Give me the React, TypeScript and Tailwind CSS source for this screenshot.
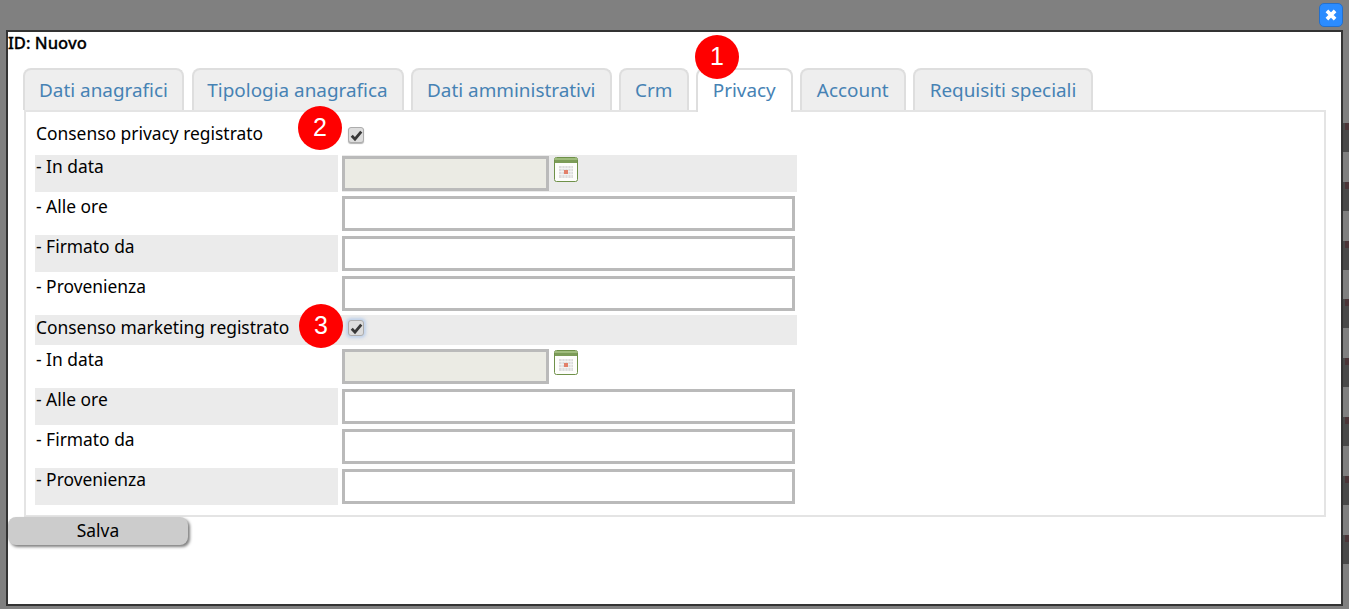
const tabs = [
  { t: "Dati anagrafici", w: "w-[161px]" },
  { t: "Tipologia anagrafica", w: "w-[212px]" },
  { t: "Dati amministrativi", w: "w-[200.5px]" },
  { t: "Crm", w: "w-[69.5px]" },
  { t: "Privacy", w: "w-[96.5px]", active: true },
  { t: "Account", w: "w-[105.5px]" },
  { t: "Requisiti speciali", w: "w-[180px]" },
];

const marks = [0, 1, 2, 3, 4, 5, 6, 7];

function Check({ focus }: { focus?: boolean }) {
  return (
    <span
      className={`flex h-[16px] w-[16px] items-center justify-center rounded-[3px] border border-[#adadad] bg-[#dddddd] ${
        focus ? "shadow-[0_0_3px_2px_rgba(150,185,235,0.5)]" : "shadow-[0_1px_1px_rgba(0,0,0,0.3)]"
      }`}
    >
      <svg viewBox="0 0 12 12" className="h-[13px] w-[13px]">
        <path d="M1.6 6.2 4.6 9.4 10.4 2.4" fill="none" stroke="#383838" strokeWidth="2.6" />
      </svg>
    </span>
  );
}

function Cal() {
  return (
    <svg viewBox="0 0 24 25" className="ml-[5px] mt-[2px] h-[25px] w-[24px] shrink-0">
      <rect x="0.5" y="0.5" width="23" height="24" rx="2" fill="#fdfdfb" stroke="#6f9149" />
      <rect x="1" y="1" width="22" height="2" fill="#9fbc7c" />
      <rect x="1" y="3" width="22" height="3" fill="#7c9c58" />
      <rect x="5" y="9" width="14" height="12" fill="#dcdcdc" />
      <path
        d="M5 11.5H19M5 14.5H19M5 17.5H19M8 9V21M11 9V21M14 9V21M17 9V21"
        stroke="#f6f6f6"
        strokeWidth="0.8"
      />
      <rect x="10" y="13" width="4" height="4" fill="#e2806a" />
    </svg>
  );
}

function Badge({ n, className }: { n: number; className: string }) {
  return (
    <span
      className={`absolute z-20 flex h-[44px] w-[44px] items-center justify-center rounded-full bg-[#ff0000] font-['Liberation_Sans',sans-serif] text-[25px] text-white ${className}`}
    >
      {n}
    </span>
  );
}

function Row({ label, gray, date }: { label: string; gray?: boolean; date?: boolean }) {
  return (
    <div className="flex h-[37px] w-[762px]">
      <div className={`w-[303px] pl-[1px] leading-[22px] ${gray ? "bg-[#ebebeb]" : ""}`}>{label}</div>
      <div className={`ml-[4px] flex w-[455px] items-start ${gray && date ? "bg-[#ebebeb]" : ""}`}>
        {date ? (
          <>
            <div className="mt-[1px] h-[35px] w-[207px] border-[3px] border-[#bababa] bg-[#ebebe4]" />
            <Cal />
          </>
        ) : (
          <div className="mt-[1px] h-[35px] w-[453px] border-[3px] border-[#bababa] bg-white" />
        )}
      </div>
    </div>
  );
}

function CheckRow({
  label,
  gray,
  h,
  labelPad,
  boxPad,
  focus,
}: {
  label: string;
  gray?: boolean;
  h: string;
  labelPad: string;
  boxPad: string;
  focus?: boolean;
}) {
  return (
    <div className={`flex w-[762px] ${h} ${gray ? "bg-[#ebebeb]" : ""}`}>
      <div className={`w-[303px] pl-[1px] leading-[22px] ${labelPad}`}>{label}</div>
      <div className={`ml-[10px] ${boxPad}`}>
        <Check focus={focus} />
      </div>
    </div>
  );
}

export default function App() {
  return (
    <div className="relative flex h-[609px] w-[1349px] overflow-hidden bg-[#808080] font-['Noto_Sans',sans-serif] text-[17.4px] text-black">
      <div className="ml-[6px] mt-[30px] h-[576px] w-[1337px] shrink-0 border-2 border-[#333333] bg-white">
        <div className="h-[20px] text-[16.6px] font-medium leading-[22px] [-webkit-text-stroke:0.3px_black]">ID: Nuovo</div>
        <div className="ml-[15px] mt-[16px] flex h-[42px] items-start gap-[7.5px]">
          {tabs.map((x) => (
            <div
              key={x.t}
              className={`${x.w} flex justify-center rounded-t-[8px] border-2 border-b-0 border-[#dedede] pt-[7px] text-[18.9px] leading-[26px] text-[#4682b4] ${
                x.active ? "h-[44px] bg-white" : "h-[42px] bg-[#eeeeee]"
              }`}
            >
              {x.t}
            </div>
          ))}
        </div>
        <div className="ml-[16px] h-[407px] w-[1302px] border-2 border-[#e4e4e4] px-[9px] pt-[6px]">
          <div className="flex flex-col gap-[3px]">
            <CheckRow label="Consenso privacy registrato" h="h-[34px]" labelPad="pt-[4px]" boxPad="pt-[9px]" />
            <Row label="- In data" gray date />
            <Row label="- Alle ore" />
            <Row label="- Firmato da" gray />
            <Row label="- Provenienza" />
            <CheckRow label="Consenso marketing registrato" gray h="h-[30px]" labelPad="pt-[1px]" boxPad="pt-[5px]" focus />
            <Row label="- In data" date />
            <Row label="- Alle ore" gray />
            <Row label="- Firmato da" />
            <Row label="- Provenienza" gray />
          </div>
        </div>
        <button className="flex h-[28px] w-[180px] items-center justify-center rounded-[8px] bg-[#cccccc] pb-[2px] shadow-[2px_2px_3px_rgba(0,0,0,0.5)]">
          Salva
        </button>
      </div>
      <div className="flex w-[6px] shrink-0 flex-col gap-[29.8px] pt-[123px]">
        {marks.map((m) => (
          <div key={m} className="h-[29px] w-[6px] bg-[#4a4a4a]">
            <div className="ml-[2px] h-[7px] w-[4px] bg-[#4b3538]" />
          </div>
        ))}
      </div>
      <Badge n={1} className="left-[695px] top-[35px]" />
      <Badge n={2} className="left-[298px] top-[106px]" />
      <Badge n={3} className="left-[299px] top-[304px]" />
      <span className="absolute left-[1319px] top-[3px] flex h-[24px] w-[24px] items-center justify-center rounded-[5px] border border-[#2470cc] bg-[#2b8cff]">
        <svg viewBox="0 0 12 12" className="h-[14px] w-[14px]">
          <path d="M2.5 2.5 9.5 9.5M9.5 2.5 2.5 9.5" stroke="#fff" strokeWidth="3.2" />
        </svg>
      </span>
    </div>
  );
}
